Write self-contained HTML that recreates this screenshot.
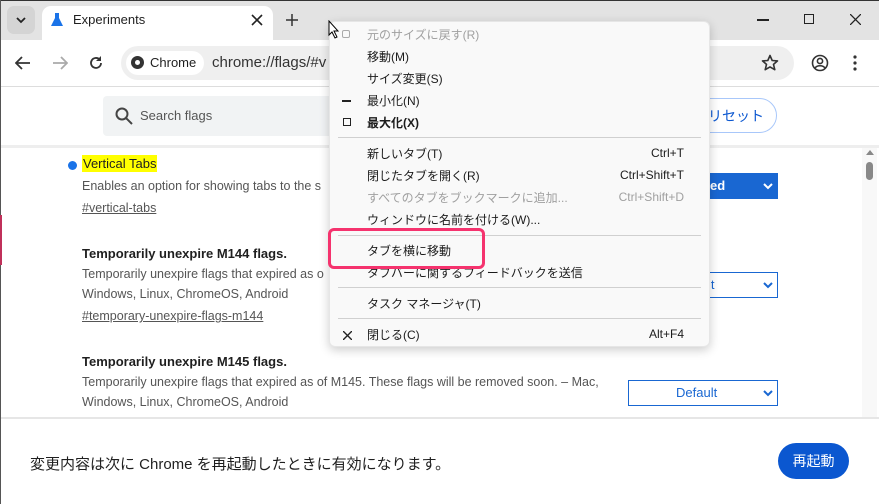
<!DOCTYPE html>
<html><head><meta charset="utf-8"><style>
*{box-sizing:border-box;margin:0;padding:0}
body{width:879px;height:504px;overflow:hidden;background:#fff;font-family:"Liberation Sans","Noto Sans CJK JP",sans-serif;position:relative;color:#1f1f1f}
.a{position:absolute}
.mi{position:absolute;left:37px;font-size:12px;color:#1b1b1b;line-height:16px}
.sc{position:absolute;right:25px;font-size:12px;color:#1b1b1b}
.sep{position:absolute;left:8px;right:8px;height:1px;background:#d0d0d0}
.dis{color:#a0a0a0}
</style></head><body>
<div class="a" style="left:0;top:0;width:879px;height:40px;background:#e3e3e3"></div>
<div class="a" style="left:0;top:0;width:879px;height:1px;background:#333"></div>
<div class="a" style="left:7px;top:6px;width:28px;height:28px;background:#d4d4d4;border-radius:7px"></div>
<svg class="a" style="left:15px;top:15px" width="12" height="10"><path d="M2 3l4 4 4-4" stroke="#222" stroke-width="1.8" fill="none"/></svg>
<div class="a" style="left:42px;top:6px;width:231px;height:36px;background:#fff;border-radius:9px 9px 0 0"></div>
<svg class="a" style="left:50px;top:12px" width="14" height="16"><path d="M4 1h6M5 1v5L1 14h12L9 6V1" fill="#1a73e8"/></svg>
<div class="a" style="left:73px;top:12px;font-size:13px;color:#1f1f1f">Experiments</div>
<svg class="a" style="left:251px;top:14px" width="12" height="12"><path d="M1 1l10 10M11 1L1 11" stroke="#222" stroke-width="1.6"/></svg>
<svg class="a" style="left:286px;top:14px" width="12" height="12"><path d="M6 0v12M0 6h12" stroke="#333" stroke-width="1.5"/></svg>
<div class="a" style="left:757px;top:19px;width:12px;height:1.5px;background:#222"></div>
<div class="a" style="left:804px;top:14px;width:10px;height:10px;border:1.3px solid #222"></div>
<svg class="a" style="left:850px;top:14px" width="11" height="11"><path d="M0 0l11 11M11 0L0 11" stroke="#222" stroke-width="1.3"/></svg>
<div class="a" style="left:0;top:40px;width:879px;height:46px;background:#fff"></div>
<svg class="a" style="left:15px;top:56px" width="16" height="14"><path d="M15 7H2M7 1L1 7l6 6" stroke="#333" stroke-width="1.8" fill="none"/></svg>
<svg class="a" style="left:52px;top:56px" width="16" height="14"><path d="M1 7h13M9 1l6 6-6 6" stroke="#aaa" stroke-width="1.8" fill="none"/></svg>
<svg class="a" style="left:88px;top:55px" width="16" height="16"><path d="M13 8a5 5 0 1 1-1.5-3.6" stroke="#333" stroke-width="1.8" fill="none"/><path d="M13 1v5H8z" fill="#333"/></svg>
<div class="a" style="left:121px;top:46px;width:673px;height:34px;background:#efefef;border-radius:17px"></div>
<div class="a" style="left:126px;top:51px;width:78px;height:24px;background:#fff;border-radius:12px"></div>
<div class="a" style="left:131px;top:56px;width:13px;height:13px;border-radius:50%;background:#333;border:3px solid #333"><div style="width:5px;height:5px;margin:1px;border-radius:50%;background:#fff"></div></div>
<div class="a" style="left:150px;top:55px;font-size:13px;color:#1f1f1f">Chrome</div>
<div class="a" style="left:212px;top:54px;font-size:15px;color:#333">chrome://flags/#v</div>
<svg class="a" style="left:761px;top:54px" width="18" height="18"><path d="M9 1.5l2.2 5 5.3.4-4 3.5 1.3 5.3L9 12.9 4.2 15.7l1.3-5.3-4-3.5 5.3-.4z" stroke="#333" stroke-width="1.6" fill="none" stroke-linejoin="round"/></svg>
<svg class="a" style="left:811px;top:54px" width="18" height="18"><circle cx="9" cy="9" r="7.5" stroke="#333" stroke-width="1.6" fill="none"/><circle cx="9" cy="7" r="2.6" stroke="#333" stroke-width="1.6" fill="none"/><path d="M4 14c2-3 8-3 10 0" stroke="#333" stroke-width="1.6" fill="none"/></svg>
<svg class="a" style="left:853px;top:55px" width="4" height="16"><circle cx="2" cy="2" r="1.6" fill="#333"/><circle cx="2" cy="8" r="1.6" fill="#333"/><circle cx="2" cy="14" r="1.6" fill="#333"/></svg>
<div class="a" style="left:0;top:86px;width:879px;height:1px;background:#ddd"></div>
<div class="a" style="left:103px;top:96px;width:600px;height:40px;background:#f1f3f4;border-radius:4px"></div>
<svg class="a" style="left:114px;top:106px" width="20" height="20"><circle cx="8" cy="8" r="5.5" stroke="#444" stroke-width="2" fill="none"/><path d="M12 12l6 6" stroke="#444" stroke-width="2"/></svg>
<div class="a" style="left:140px;top:108px;font-size:13px;color:#555">Search flags</div>
<div class="a" style="left:660px;top:98px;width:117px;height:35px;border:1px solid #a8c7fa;border-radius:18px;background:#fff"></div>
<div class="a" style="left:708px;top:106px;font-size:14px;color:#0b57d0">リセット</div>
<div class="a" style="left:0;top:145px;width:879px;height:3px;background:#eee"></div>
<div class="a" style="left:68px;top:161px;width:9px;height:9px;border-radius:50%;background:#1a73e8"></div>
<div class="a" style="left:82px;top:155px;background:#ffff00;font-size:13px;padding:1px 1px;color:#1f1f1f">Vertical Tabs</div>
<div class="a" style="left:82px;top:179px;font-size:12.5px;color:#555;white-space:nowrap">Enables an option for showing tabs to the s</div>
<div class="a" style="left:82px;top:201px;font-size:12.5px;color:#555;text-decoration:underline">#vertical-tabs</div>
<div class="a" style="left:82px;top:246px;font-size:13px;font-weight:bold">Temporarily unexpire M144 flags.</div>
<div class="a" style="left:82px;top:267px;font-size:12.5px;color:#555;white-space:nowrap">Temporarily unexpire flags that expired as o</div>
<div class="a" style="left:82px;top:287px;font-size:12.5px;color:#555">Windows, Linux, ChromeOS, Android</div>
<div class="a" style="left:82px;top:309px;font-size:12.5px;color:#555;text-decoration:underline">#temporary-unexpire-flags-m144</div>
<div class="a" style="left:82px;top:354px;font-size:13px;font-weight:bold">Temporarily unexpire M145 flags.</div>
<div class="a" style="left:82px;top:375px;font-size:12.5px;color:#555;white-space:nowrap">Temporarily unexpire flags that expired as of M145. These flags will be removed soon. – Mac,</div>
<div class="a" style="left:82px;top:395px;font-size:12.5px;color:#555">Windows, Linux, ChromeOS, Android</div>
<div class="a" style="left:628px;top:173px;width:150px;height:26px;background:#1967d2"></div>
<div class="a" style="left:710px;top:178px;font-size:13px;color:#fff;font-weight:bold">ed</div>
<svg class="a" style="left:763px;top:182px" width="10" height="8"><path d="M1 2l4 4 4-4" stroke="#fff" stroke-width="2" fill="none"/></svg>
<div class="a" style="left:628px;top:272px;width:150px;height:26px;border:1px solid #1967d2;background:#fff"></div>
<div class="a" style="left:708px;top:277px;font-size:13px;color:#1967d2">lt</div>
<svg class="a" style="left:763px;top:281px" width="10" height="8"><path d="M1 2l4 4 4-4" stroke="#1967d2" stroke-width="2" fill="none"/></svg>
<div class="a" style="left:628px;top:380px;width:150px;height:26px;border:1px solid #1967d2;background:#fff"></div>
<div class="a" style="left:676px;top:385px;font-size:13px;color:#1967d2">Default</div>
<svg class="a" style="left:763px;top:389px" width="10" height="8"><path d="M1 2l4 4 4-4" stroke="#1967d2" stroke-width="2" fill="none"/></svg>
<div class="a" style="left:862px;top:148px;width:15px;height:270px;background:#f8f8f8"></div>
<div class="a" style="left:866px;top:150px;width:0;height:0;border-left:4px solid transparent;border-right:4px solid transparent;border-bottom:5px solid #888"></div>
<div class="a" style="left:866px;top:162px;width:7px;height:18px;background:#888;border-radius:4px"></div>
<div class="a" style="left:0;top:417px;width:879px;height:87px;background:#fff;border-top:2px solid #e6e6e6"></div>
<div class="a" style="left:30px;top:453px;font-size:15px;color:#1f1f1f">変更内容は次に Chrome を再起動したときに有効になります。</div>
<div class="a" style="left:778px;top:443px;width:71px;height:36px;background:#0b57d0;border-radius:18px;color:#fff;font-size:14px;text-align:center;line-height:36px">再起動</div>
<div class="a" style="left:0;top:0;width:1px;height:504px;background:#555"></div>
<div class="a" style="left:0;top:215px;width:2px;height:50px;background:#c0305a"></div>
<div class="a" style="left:329px;top:21px;width:381px;height:326px;background:#f9f9f9;border-radius:6px;box-shadow:0 3px 10px rgba(0,0,0,.2);border:1px solid #e6e6e6">
<div class="a" style="left:12px;top:8px;width:8px;height:8px;border:1.2px solid #aaa;border-radius:2px"></div>
<div class="mi dis" style="top:5px">元のサイズに戻す(R)</div>
<div class="mi" style="top:27px">移動(M)</div>
<div class="mi" style="top:49px">サイズ変更(S)</div>
<div class="a" style="left:12px;top:78px;width:9px;height:1.5px;background:#222"></div>
<div class="mi" style="top:71px">最小化(N)</div>
<div class="a" style="left:13px;top:96px;width:8px;height:8px;border:1.5px solid #222"></div>
<div class="mi" style="top:93px;font-weight:bold">最大化(X)</div>
<div class="sep" style="top:115px"></div>
<div class="mi" style="top:124px">新しいタブ(T)</div><div class="sc" style="top:124px">Ctrl+T</div>
<div class="mi" style="top:146px">閉じたタブを開く(R)</div><div class="sc" style="top:146px">Ctrl+Shift+T</div>
<div class="mi dis" style="top:168px">すべてのタブをブックマークに追加...</div><div class="sc dis" style="top:168px">Ctrl+Shift+D</div>
<div class="mi" style="top:190px">ウィンドウに名前を付ける(W)...</div>
<div class="sep" style="top:213px"></div>
<div class="mi" style="top:221px">タブを横に移動</div>
<div class="mi" style="top:243px">タブバーに関するフィードバックを送信</div>
<div class="sep" style="top:265px"></div>
<div class="mi" style="top:274px">タスク マネージャ(T)</div>
<div class="sep" style="top:296px"></div>
<svg class="a" style="left:13px;top:309px" width="9" height="9"><path d="M0 0l9 9M9 0L0 9" stroke="#222" stroke-width="1.4"/></svg>
<div class="mi" style="top:305px">閉じる(C)</div><div class="sc" style="top:305px">Alt+F4</div>
</div>
<div class="a" style="left:328px;top:228px;width:157px;height:41px;border:3.5px solid #f5336e;border-radius:6px"></div>
<svg class="a" style="left:328px;top:20px" width="12" height="20"><path d="M1 1v14l3-3 3 6 2-1-3-6h4z" fill="#fff" stroke="#000" stroke-width="1"/></svg>
</body></html>
